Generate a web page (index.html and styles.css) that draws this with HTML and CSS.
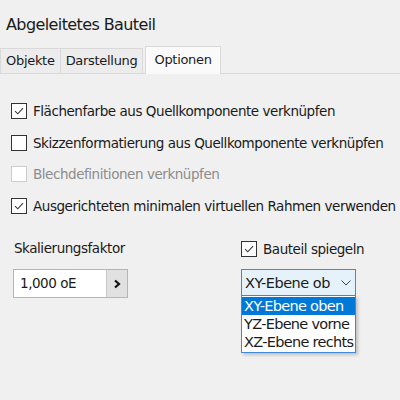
FILE: index.html
```html
<!DOCTYPE html>
<html>
<head>
<meta charset="utf-8">
<link rel="stylesheet" href="styles.css">
</head>
<body>
<div class="dialog">
  <div class="title">Abgeleitetes Bauteil</div>
  <div class="tabs">
    <div class="tab">Objekte</div>
    <div class="tab">Darstellung</div>
    <div class="tab active">Optionen</div>
  </div>
  <div class="panel">
    <div class="checks">
      <label class="row"><span class="box checked"><svg viewBox="0 0 16 16"><path d="M3.5 8.2 L6.6 11.2 L12.6 4.8" /></svg></span><span>Flächenfarbe aus Quellkomponente verknüpfen</span></label>
      <label class="row"><span class="box"></span><span>Skizzenformatierung aus Quellkomponente verknüpfen</span></label>
      <label class="row disabled"><span class="box"></span><span>Blechdefinitionen verknüpfen</span></label>
      <label class="row"><span class="box checked"><svg viewBox="0 0 16 16"><path d="M3.5 8.2 L6.6 11.2 L12.6 4.8" /></svg></span><span>Ausgerichteten minimalen virtuellen Rahmen verwenden</span></label>
    </div>
    <div class="bottom">
      <div class="col-left">
        <div class="label">Skalierungsfaktor</div>
        <div class="input">
          <span class="value">1,000 oE</span>
          <span class="btn"><svg viewBox="0 0 10 10"><path d="M3 1.5 L7 5 L3 8.5" /></svg></span>
        </div>
      </div>
      <div class="col-right">
        <label class="row"><span class="box checked"><svg viewBox="0 0 16 16"><path d="M3.5 8.2 L6.6 11.2 L12.6 4.8" /></svg></span><span>Bauteil spiegeln</span></label>
        <div class="combo-wrap">
          <div class="combo">
            <span class="value">XY-Ebene ob</span>
            <svg class="chev" viewBox="0 0 10 6"><path d="M0.5 0.5 L5 5 L9.5 0.5" /></svg>
          </div>
          <div class="list">
            <div class="item sel">XY-Ebene oben</div>
            <div class="item">YZ-Ebene vorne</div>
            <div class="item">XZ-Ebene rechts</div>
          </div>
        </div>
      </div>
    </div>
  </div>
</div>
</body>
</html>
```
FILE: styles.css
```css
html, body {
  margin: 0;
  padding: 0;
  background: #f0f0f0;
}
body {
  width: 400px;
  height: 400px;
  overflow: hidden;
  font-family: "DejaVu Sans", sans-serif;
  font-size: 13.5px;
  color: #1a1a1a;
}
.dialog {
  display: flex;
  flex-direction: column;
}
.title {
  font-size: 16px;
  padding: 15px 0 0 6px;
  height: 36px;
  box-sizing: border-box;
  letter-spacing: -0.6px;
}
.tabs {
  display: flex;
  align-items: flex-end;
  height: 38px;
  border-bottom: 1px solid #d9d9d9;
  box-sizing: border-box;
  font-size: 13px;
}
.tab {
  height: 24px;
  line-height: 23px;
  padding: 0 5px;
  background: #ececec;
  border: 1px solid #d9d9d9;
  border-bottom: none;
  margin-right: -1px;
  letter-spacing: -0.3px;
}
.tab.active {
  height: 27px;
  line-height: 26px;
  background: #fafafa;
  margin-left: 3px;
  padding: 0 8px;
  margin-bottom: -1px;
}
.panel {
  padding: 28px 0 0 11px;
}
.checks {
  display: flex;
  flex-direction: column;
  gap: 13.7px;
}
.row {
  display: flex;
  align-items: center;
  gap: 6px;
  height: 18px;
  letter-spacing: -0.45px;
  white-space: nowrap;
}
.box {
  width: 14px;
  height: 14px;
  border: 1px solid #333;
  background: #fff;
  flex: none;
}
.box svg {
  width: 14px;
  height: 14px;
  display: block;
}
.box svg path {
  fill: none;
  stroke: #333;
  stroke-width: 1.2;
}
.disabled {
  color: #8c8c8c;
}
.disabled .box {
  border-color: #cccccc;
}
.bottom {
  display: flex;
  margin-top: 24px;
}
.col-left {
  width: 227px;
  padding-left: 3px;
}
.label {
  letter-spacing: -0.45px;
  height: 18px;
  line-height: 18px;
}
.input {
  margin-top: 12px;
  width: 115px;
  height: 29px;
  box-sizing: border-box;
  border: 1px solid #b5b5b5;
  background: #fff;
  display: flex;
  align-items: stretch;
  margin-left: -1px;
}
.input .value {
  flex: 1;
  line-height: 27px;
  padding-left: 6px;
  letter-spacing: -0.45px;
}
.input .btn {
  width: 20px;
  background: #e1e1e1;
  border-left: 1px solid #c8c8c8;
  display: flex;
  align-items: center;
  justify-content: center;
}
.input .btn svg {
  width: 10px;
  height: 10px;
}
.input .btn svg path {
  fill: none;
  stroke: #111;
  stroke-width: 2.2;
}
.col-right {
  padding-top: 1px;
}
.combo-wrap {
  margin-top: 11px;
  width: 115px;
  font-size: 14.5px;
}
.combo {
  height: 27px;
  box-sizing: border-box;
  border: 1px solid #3c8ad8;
  background: #e5f1fb;
  display: flex;
  align-items: center;
  padding: 0 4px 0 3px;
  justify-content: space-between;
  letter-spacing: -0.5px;
}
.chev {
  width: 10px;
  height: 6px;
}
.chev path {
  fill: none;
  stroke: #444;
  stroke-width: 1;
}
.list {
  border: 1px solid #3c8ad8;
  border-top: none;
  background: #fff;
  box-shadow: 2px 2px 3px rgba(0,0,0,0.2);
  padding: 1px 0 1px 0;
}
.item {
  height: 18px;
  line-height: 18px;
  padding-left: 2px;
  letter-spacing: -0.7px;
  white-space: nowrap;
}
.item.sel {
  background: #0078d7;
  color: #fff;
}
```
